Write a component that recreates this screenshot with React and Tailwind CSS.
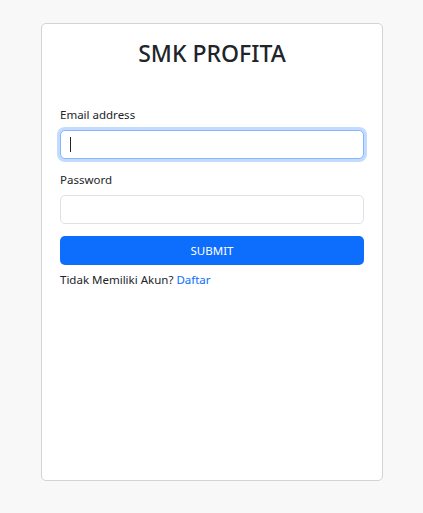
import React from 'react'

export default function App() {
  return (
    <div className="min-h-[513px] w-full bg-[#f8f8f8] pt-[23px] pl-[41px]" style={{fontFamily: '"Noto Sans", "Open Sans", sans-serif'}}>
      <div className="w-[342px] h-[458px] bg-white border border-[#d3d3d3] rounded-[5px] px-[18px] pt-[12px]">
        <h1 className="text-center text-[23px] leading-[34px] text-[#212529] font-medium">
          SMK PROFITA
        </h1>

        <form className="mt-[37px]" onSubmit={(e) => e.preventDefault()}>
          <label className="block text-[11.5px] leading-[16px] text-[#212529] mb-[7px]">
            Email address
          </label>
          <div className="h-[29px] w-full rounded-[5px] border border-[#86b7fe] shadow-[0_0_0_3px_rgba(13,110,253,0.25)] bg-white flex items-center pl-[9px]">
            <span className="block w-px h-[15px] bg-[#212529]"></span>
          </div>

          <label className="block text-[11.5px] leading-[16px] text-[#212529] mt-[13px] mb-[7px]">
            Password
          </label>
          <div className="h-[29px] w-full rounded-[5px] border border-[#dee2e6] bg-white"></div>

          <button type="submit" className="mt-[12px] h-[29px] w-full rounded-[5px] bg-[#0d6efd] text-white text-[11.5px]">
            SUBMIT
          </button>

          <p className="mt-[7px] text-[11.5px] leading-[16px] text-[#212529]">
            Tidak Memiliki Akun? <a className="text-[#0d6efd] cursor-pointer">Daftar</a>
          </p>
        </form>
      </div>
    </div>
  )
}
